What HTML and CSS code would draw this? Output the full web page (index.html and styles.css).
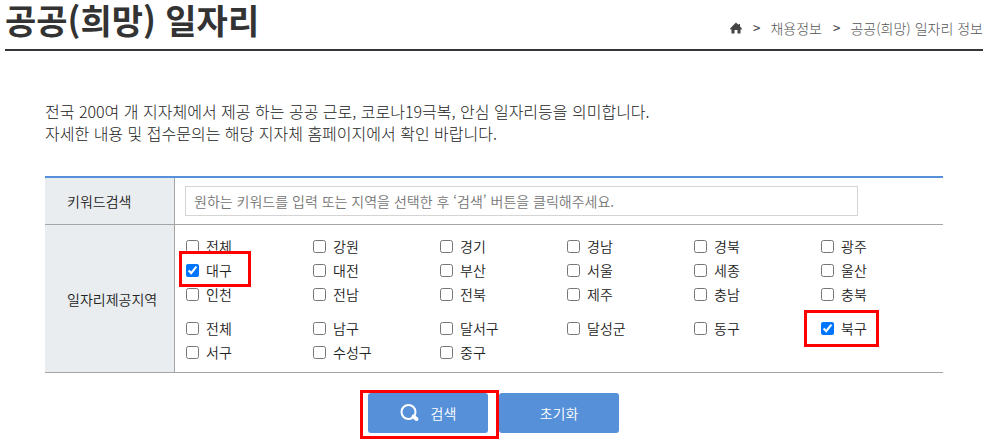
FILE: index.html
```html
<!DOCTYPE html>
<html lang="ko">
<head>
<meta charset="utf-8">
<meta name="viewport" content="width=device-width, initial-scale=1">
<title>공공(희망) 일자리</title>
<link rel="stylesheet" href="styles.css">
</head>
<body>
<header class="page-head">
  <h1>공공(희망) 일자리</h1>
  <nav class="crumbs">
    <a href="#" aria-label="홈"><svg class="home" viewBox="0 0 12 12" width="12" height="12"><path d="M6 0.500 0.300 6.200v1.300h1.200V11.500h3V8h3v3.500h3V7.500h1.200V6.200L10 4.500V2H8.500v1z" fill="#444"/></svg></a>
    <span class="sep">&gt;</span>
    <a href="#">채용정보</a>
    <span class="sep">&gt;</span>
    <a href="#">공공(희망) 일자리 정보</a>
  </nav>
</header>
<main>
  <p class="intro">전국 200여 개 지자체에서 제공 하는 공공 근로, 코로나19극복, 안심 일자리등을 의미합니다.<br>자세한 내용 및 접수문의는 해당 지자체 홈페이지에서 확인 바랍니다.</p>
  <form>
    <table class="search">
      <tr>
        <th scope="row"><label for="keyword">키워드검색</label></th>
        <td><input class="keyword" id="keyword" type="text" placeholder="원하는 키워드를 입력 또는 지역을 선택한 후 ‘검색’ 버튼을 클릭해주세요."></td>
      </tr>
      <tr>
        <th scope="row">일자리제공지역</th>
        <td class="regions">
          <div class="options">
            <label><input type="checkbox">전체</label>
            <label><input type="checkbox">강원</label>
            <label><input type="checkbox">경기</label>
            <label><input type="checkbox">경남</label>
            <label><input type="checkbox">경북</label>
            <label><input type="checkbox">광주</label>
            <label class="marked"><input type="checkbox" checked>대구</label>
            <label><input type="checkbox">대전</label>
            <label><input type="checkbox">부산</label>
            <label><input type="checkbox">서울</label>
            <label><input type="checkbox">세종</label>
            <label><input type="checkbox">울산</label>
            <label><input type="checkbox">인천</label>
            <label><input type="checkbox">전남</label>
            <label><input type="checkbox">전북</label>
            <label><input type="checkbox">제주</label>
            <label><input type="checkbox">충남</label>
            <label><input type="checkbox">충북</label>
          </div>
          <div class="options">
            <label><input type="checkbox">전체</label>
            <label><input type="checkbox">남구</label>
            <label><input type="checkbox">달서구</label>
            <label><input type="checkbox">달성군</label>
            <label><input type="checkbox">동구</label>
            <label class="marked marked-wide"><input type="checkbox" checked>북구</label>
            <label><input type="checkbox">서구</label>
            <label><input type="checkbox">수성구</label>
            <label><input type="checkbox">중구</label>
          </div>
        </td>
      </tr>
    </table>
    <div class="actions">
      <button class="marked" type="submit"><svg viewBox="0 0 20 18" width="20" height="18"><circle cx="8.500" cy="8" r="7" fill="none" stroke="#fff" stroke-width="2"/><path d="m13.500 12.500 3 2.500" stroke="#fff" stroke-width="4" stroke-linecap="round"/></svg>검색</button>
      <button type="reset">초기화</button>
    </div>
  </form>
</main>
</body>
</html>
```
FILE: styles.css
```css
* { box-sizing: border-box; }

body {
  margin: 0;
  padding: 0 16px 13px 5px;
  background: #fff;
  color: #222;
  font: 350 14px/24px "Noto Sans CJK KR", sans-serif;
}

a { color: inherit; text-decoration: none; }

.page-head {
  display: flex;
  justify-content: space-between;
  align-items: flex-start;
  padding-bottom: 9px;
  border-bottom: 2px solid #333538;
}

h1 {
  margin: 0;
  color: #333;
  font-size: 34px;
  line-height: 40px;
  font-weight: 700;
}

.crumbs {
  display: flex;
  align-items: center;
  margin-top: 16px;
  color: #555;
  font-weight: 300;
}

.home { display: block; }

.sep {
  margin: 0 10px 0 11px;
  font-size: 13px;
  font-weight: 500;
}

main { padding: 0 40px; }

.intro {
  margin: 49px 0 32px;
  font-size: 16px;
  line-height: 22px;
  font-weight: 300;
}

.search {
  width: 100%;
  border-collapse: separate;
  border-spacing: 0;
  border-top: 2px solid #5690d9;
}

.search th,
.search td {
  padding: 8px 10px;
  border-bottom: 1px solid #a5a5a5;
  text-align: left;
}

.search th {
  width: 130px;
  padding-left: 22px;
  border-right: 1px solid #a5a5a5;
  background: #e9edf0;
  font-weight: inherit;
  white-space: nowrap;
}

.keyword {
  display: block;
  width: 90%;
  height: 30px;
  padding: 0 8px;
  border: 1px solid #d5d5d5;
  color: #333;
  font: inherit;
}

.keyword::placeholder { color: #757575; }

.search .regions { padding: 9px 0 8px 11px; }

.options {
  display: grid;
  grid-template-columns: repeat(6, minmax(0, 1fr));
  margin-right: -5px;
}

.options + .options { margin-top: 10px; }

.options label {
  display: flex;
  align-items: center;
  justify-self: start;
  gap: 7px;
}

.options input {
  width: 13px;
  height: 13px;
  margin: 0;
}

.marked { position: relative; }

.marked::after {
  content: "";
  position: absolute;
  inset: -7px -19px -5px -7px;
  border: 3px solid #f00;
  pointer-events: none;
}

.marked-wide::after {
  inset: -6px -12px -7px -17px;
}

.actions {
  display: flex;
  justify-content: center;
  gap: 11px;
  margin: 20px 1px 0 0;
}

.actions button {
  display: flex;
  align-items: center;
  justify-content: center;
  gap: 11px;
  width: 120px;
  height: 40px;
  padding: 0;
  border: 0;
  border-radius: 3px;
  background: #5690d9;
  color: #fff;
  font: inherit;
}

.actions .marked::after { inset: -3px -11px -6px -8px; }
```
